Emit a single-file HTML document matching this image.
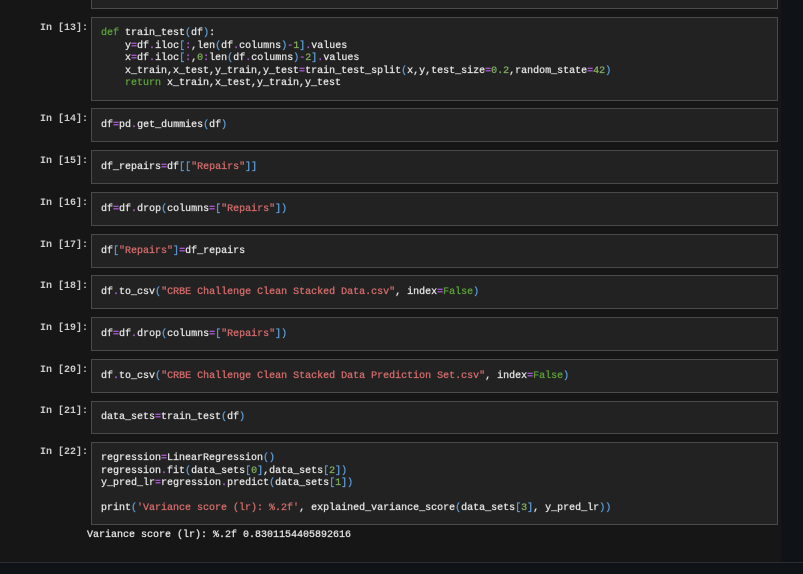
<!DOCTYPE html><html><head><style>
body{margin:0;width:803px;height:573px;background:#161616;position:relative;overflow:hidden;font-family:"Liberation Mono",monospace;font-size:10px;color:#d4d4d4}
.rs{position:absolute;left:781px;top:0;width:22px;height:573px;background:#0f1216}
.bb{position:absolute;left:0;top:562px;width:803px;height:11px;background:#0f1216;border-top:1px solid #2a2d31}
.c{position:absolute;left:91px;width:685px;background:#222;border:1px solid #4a4a4a}
.l{position:absolute;left:40px;color:#ccc;font-weight:bold}
pre{margin:0;position:absolute;left:101px;font-family:inherit;font-size:10px;line-height:12.5px;color:#e0e0e0;-webkit-text-stroke:0.3px currentColor}
.k{color:#5a9e3a}.o{color:#b05bd8}.b{color:#5b9bd5}.s{color:#d06a6a}.n{color:#7fae5f}
</style></head><body>
<div class="rs"></div>
<div class="c" style="top:-2px;height:9px"></div>
<div class="c" style="top:17px;height:82px"></div><div class="l" style="top:23px">In [13]:</div>
<pre style="top:28px"><span class="k">def</span> train_test<span class="b">(</span>df<span class="b">)</span>:
    y<span class="o">=</span>df<span class="o">.</span>iloc<span class="b">[</span><span class="o">:</span>,len<span class="b">(</span>df<span class="o">.</span>columns<span class="b">)</span><span class="o">-</span><span class="n">1</span><span class="b">]</span><span class="o">.</span>values
    x<span class="o">=</span>df<span class="o">.</span>iloc<span class="b">[</span><span class="o">:</span>,<span class="n">0</span><span class="o">:</span>len<span class="b">(</span>df<span class="o">.</span>columns<span class="b">)</span><span class="o">-</span><span class="n">2</span><span class="b">]</span><span class="o">.</span>values
    x_train,x_test,y_train,y_test<span class="o">=</span>train_test_split<span class="b">(</span>x,y,test_size<span class="o">=</span><span class="n">0.2</span>,random_state<span class="o">=</span><span class="n">42</span><span class="b">)</span>
    <span class="k">return</span> x_train,x_test,y_train,y_test</pre>
<div class="c" style="top:108px;height:32px"></div><div class="l" style="top:114px">In [14]:</div>
<pre style="top:120px">df<span class="o">=</span>pd<span class="o">.</span>get_dummies<span class="b">(</span>df<span class="b">)</span></pre>
<div class="c" style="top:150px;height:32px"></div><div class="l" style="top:156px">In [15]:</div>
<pre style="top:162px">df_repairs<span class="o">=</span>df<span class="b">[[</span><span class="s">"Repairs"</span><span class="b">]]</span></pre>
<div class="c" style="top:192px;height:32px"></div><div class="l" style="top:198px">In [16]:</div>
<pre style="top:204px">df<span class="o">=</span>df<span class="o">.</span>drop<span class="b">(</span>columns<span class="o">=</span><span class="b">[</span><span class="s">"Repairs"</span><span class="b">])</span></pre>
<div class="c" style="top:234px;height:32px"></div><div class="l" style="top:240px">In [17]:</div>
<pre style="top:246px">df<span class="b">[</span><span class="s">"Repairs"</span><span class="b">]</span><span class="o">=</span>df_repairs</pre>
<div class="c" style="top:275px;height:32px"></div><div class="l" style="top:281px">In [18]:</div>
<pre style="top:287px">df<span class="o">.</span>to_csv<span class="b">(</span><span class="s">"CRBE Challenge Clean Stacked Data.csv"</span>, index<span class="o">=</span><span class="k">False</span><span class="b">)</span></pre>
<div class="c" style="top:317px;height:32px"></div><div class="l" style="top:323px">In [19]:</div>
<pre style="top:329px">df<span class="o">=</span>df<span class="o">.</span>drop<span class="b">(</span>columns<span class="o">=</span><span class="b">[</span><span class="s">"Repairs"</span><span class="b">])</span></pre>
<div class="c" style="top:359px;height:32px"></div><div class="l" style="top:365px">In [20]:</div>
<pre style="top:371px">df<span class="o">.</span>to_csv<span class="b">(</span><span class="s">"CRBE Challenge Clean Stacked Data Prediction Set.csv"</span>, index<span class="o">=</span><span class="k">False</span><span class="b">)</span></pre>
<div class="c" style="top:401px;height:31px"></div><div class="l" style="top:406px">In [21]:</div>
<pre style="top:412px">data_sets<span class="o">=</span>train_test<span class="b">(</span>df<span class="b">)</span></pre>
<div class="c" style="top:442px;height:81px"></div><div class="l" style="top:447px">In [22]:</div>
<pre style="top:453px">regression<span class="o">=</span>LinearRegression<span class="b">()</span>
regression<span class="o">.</span>fit<span class="b">(</span>data_sets<span class="b">[</span><span class="n">0</span><span class="b">]</span>,data_sets<span class="b">[</span><span class="n">2</span><span class="b">])</span>
y_pred_lr<span class="o">=</span>regression<span class="o">.</span>predict<span class="b">(</span>data_sets<span class="b">[</span><span class="n">1</span><span class="b">])</span>

print<span class="b">(</span><span class="s">'Variance score (lr): %.2f'</span>, explained_variance_score<span class="b">(</span>data_sets<span class="b">[</span><span class="n">3</span><span class="b">]</span>, y_pred_lr<span class="b">))</span></pre>
<pre style="top:530px;left:87px">Variance score (lr): %.2f 0.8301154405892616</pre>
<div class="bb"></div>
</body></html>
